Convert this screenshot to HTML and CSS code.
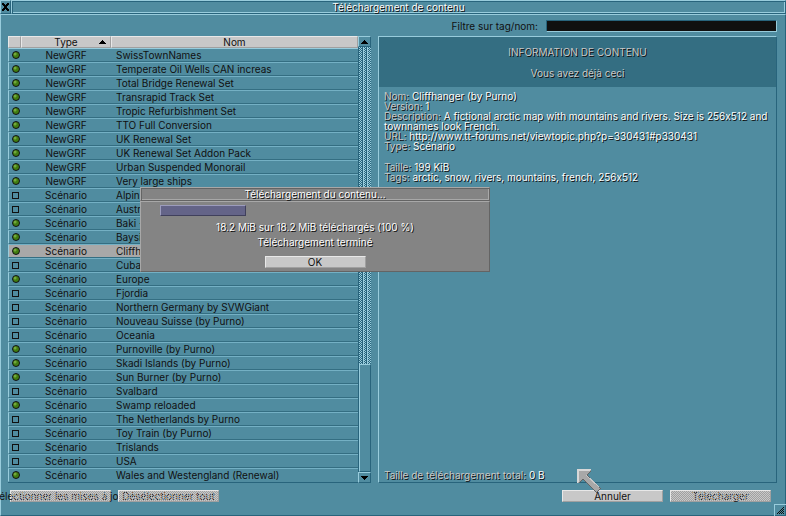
FILE: index.html
```
<!DOCTYPE html>
<html lang="fr">
<head>
<meta charset="utf-8">
<title>Téléchargement de contenu</title>
<link rel="stylesheet" href="styles.css">
</head>
<body>
<main class="window">
  <header class="titlebar">
    <button class="close" type="button" aria-label="Fermer">
      <svg width="7" height="8" viewBox="0 0 7 8" shape-rendering="crispEdges" aria-hidden="true"><path d="M0 0h2v1h1v1h1V1h1V0h2v2H6v1H5v2h1v1h1v2H5V7H4V6H3v1H2v1H0V6h1V5h1V3H1V2H0z"/></svg>
    </button>
    <h1 class="caption">Téléchargement de contenu</h1>
  </header>

  <div class="body">
    <div class="filter">
      <label for="filter">Filtre sur tag/nom:</label>
      <input id="filter" type="text">
    </div>

    <div class="columns">
      <section class="list">
        <table class="contents">
          <thead>
            <tr>
              <th class="col-state"><button class="head" type="button" aria-label="État"></button></th>
              <th class="col-type"><button class="head" type="button">Type<svg class="sort" width="7" height="4" viewBox="0 0 7 4" shape-rendering="crispEdges" aria-hidden="true"><path d="M3 0h1v1h1v1h1v1h1v1H0V3h1V2h1V1h1z"/></svg></button></th>
              <th><button class="head" type="button">Nom</button></th>
            </tr>
          </thead>
          <tbody id="rows"></tbody>
        </table>
        <div class="scrollbar">
          <button class="arrow" type="button" aria-label="Haut"><svg width="7" height="4" viewBox="0 0 7 4" shape-rendering="crispEdges" aria-hidden="true"><path d="M3 0h1v1h1v1h1v1h1v1H0V3h1V2h1V1h1z"/></svg></button>
          <div class="track"><div class="thumb"></div></div>
          <button class="arrow" type="button" aria-label="Bas"><svg width="7" height="4" viewBox="0 0 7 4" shape-rendering="crispEdges" aria-hidden="true"><path d="M0 0h7v1H6v1H5v1H4v1H3V3H2V2H1V1H0z"/></svg></button>
        </div>
      </section>

      <section class="details">
        <div class="banner">
          <h2>INFORMATION DE CONTENU</h2>
          <p>Vous avez déjà ceci</p>
        </div>
        <div class="facts">
          <p>Nom: <b>Cliffhanger (by Purno)</b></p>
          <p>Version: <b>1</b></p>
          <p>Description: <b>A fictional arctic map with mountains and rivers. Size is 256x512 and townnames look French.</b></p>
          <p>URL: <a href="http://www.tt-forums.net/viewtopic.php?p=330431#p330431">http://www.tt-forums.net/viewtopic.php?p=330431#p330431</a></p>
          <p>Type: <b>Scénario</b></p>
          <p class="spaced">Taille: <b>199 KiB</b></p>
          <p>Tags: <b>arctic, snow, rivers, mountains, french, 256x512</b></p>
        </div>
        <p class="total">Taille de téléchargement total: <b>0 B</b></p>
      </section>
    </div>

    <footer class="actions">
      <button class="btn" type="button" disabled><span>Sélectionner les mises à jour</span></button>
      <button class="btn" type="button" disabled><span>Désélectionner tout</span></button>
      <button class="btn push" type="button"><span>Annuler</span></button>
      <button class="btn" type="button" disabled><span>Télécharger</span></button>
    </footer>
  </div>

  <svg class="resize" width="12" height="12" viewBox="0 0 12 12" shape-rendering="crispEdges" aria-hidden="true">
    <path class="resize-edge" d="M0 0h12v1H1v11H0z"/>
    <path class="resize-grip" d="M3 9h1v1H3zM4 8h1v1H4zM5 7h1v1H5zM6 6h1v1H6zM7 5h1v1H7zM8 4h1v1H8zM9 3h1v1H9zM5 9h1v1H5zM6 8h1v1H6zM7 7h1v1H7zM8 6h1v1H8zM9 5h1v1H9zM7 9h1v1H7zM8 8h1v1H8zM9 7h1v1H9zM9 9h1v1H9z"/>
  </svg>

  <div class="dialog" role="dialog" aria-labelledby="dialog-title">
    <h2 class="caption" id="dialog-title">Téléchargement du contenu...</h2>
    <div class="dialog-body">
      <div class="progress"></div>
      <p>18.2 MiB sur 18.2 MiB téléchargés (100 %)</p>
      <p>Téléchargement terminé</p>
      <button class="btn" type="button"><span>OK</span></button>
    </div>
  </div>

  <svg class="pointer" width="24" height="24" viewBox="0 0 24 24" shape-rendering="crispEdges" aria-hidden="true">
    <path class="pointer-dark" d="M0 0h14v2l-4 4 14 13-5 5L6 11l-4 3H0z"/>
    <path class="pointer-fill" d="M0 0h14v1L9 6l14 13-4 4L6 10l-5 4H0z"/>
    <path class="pointer-light" d="M0 0h14l-2 2H2v10l-2 2z"/>
    <path class="pointer-shine" d="M9 6L22 18"/>
  </svg>
</main>
<script src="list.js"></script>
</body>
</html>
```
FILE: styles.css
```
:root {
  --face: #508ca0;
  --light: #98ccdc;
  --dark: #28647c;
  --deep: #346e82;
  --row-light: #74b0c4;
  --black: #101010;
  --silver: #c8c8c8;
}

* { box-sizing: border-box; }

body {
  margin: 0;
  background: var(--face);
  color: var(--black);
  font: 10px/12px Inter, "DejaVu Sans Condensed", Verdana, sans-serif;
  font-variant-ligatures: no-contextual;
}

h1, h2, p { margin: 0; font-size: 10px; font-weight: 400; }
b { font-weight: 400; color: #fcfcfc; }
button, input { font: inherit; color: inherit; padding: 0; margin: 0; border-radius: 0; }
svg { display: block; flex: none; }

.window {
  position: relative;
  display: flex;
  flex-direction: column;
  min-height: 100vh;
  background: var(--face);
}

.titlebar { display: flex; height: 14px; }

.close {
  display: grid;
  place-items: center;
  width: 11px;
  background: var(--face);
  border: 1px solid;
  border-color: var(--light) var(--dark) var(--dark) var(--light);
}

.caption {
  flex: 1;
  height: 14px;
  border: 1px solid;
  border-color: var(--light) var(--dark) var(--dark) var(--light);
  box-shadow: inset 1px 1px var(--dark), inset -1px -1px var(--light);
  color: #fcfcfc;
  text-align: center;
  text-shadow: 1px 1px var(--black);
}

.body {
  flex: 1;
  display: flex;
  flex-direction: column;
  padding: 5px 8px 13px 7px;
  border: 1px solid;
  border-color: var(--light) var(--dark) var(--dark) var(--light);
}

.filter {
  display: flex;
  justify-content: flex-end;
  gap: 8px;
  margin-bottom: 4px;
}

.filter input {
  width: 231px;
  height: 12px;
  background: var(--black);
  color: #fcfcfc;
  border: 1px solid;
  border-color: var(--dark) var(--light) var(--light) var(--dark);
}

.columns {
  flex: 1;
  display: grid;
  grid-template-columns: 363fr 399fr;
  gap: 7px;
}

.list { display: flex; align-items: stretch; }

.contents {
  flex: 1;
  table-layout: fixed;
  border-collapse: separate;
  border-spacing: 0;
  border-bottom: 1px solid var(--dark);
}

.contents th, .contents td { padding: 0; font-weight: 400; white-space: nowrap; }
.contents th { height: 12px; }
.col-state { width: 13px; }
.col-type { width: 90px; }

.head {
  position: relative;
  display: block;
  width: 100%;
  height: 12px;
  line-height: 10px;
  background: var(--silver);
  border: 1px solid;
  border-color: #e8e8e8 #a0a0a0 #a0a0a0 #e8e8e8;
}

.sort { position: absolute; right: 4px; top: 3px; }

.contents td {
  height: 14px;
  border-top: 1px solid var(--row-light);
  border-bottom: 1px solid var(--deep);
}

.contents tr:last-child td { border-bottom-color: var(--face); }
.contents tbody tr:first-child td { border-top-color: var(--light); }
.contents td:first-child { border-left: 1px solid var(--light); padding-left: 3px; }
.contents td:nth-child(2) { text-align: center; }
.contents td:nth-child(3) { padding-left: 5px; }
.contents .selected td { background: #a8a8a8; }

.contents input {
  appearance: none;
  display: block;
  width: 7px;
  height: 7px;
  border: 1px solid var(--black);
}

.contents input.owned {
  width: 8px;
  height: 8px;
  border-radius: 4px;
  background: radial-gradient(circle at 2px 2px, #74a83c 0 1px, #407c10 2px 4px, #305c08 5px);
}

.scrollbar { display: flex; flex-direction: column; width: 13px; }

.arrow {
  display: grid;
  place-items: center;
  height: 11px;
  background: var(--face);
  border: 1px solid;
  border-color: var(--light) var(--dark) var(--dark) var(--light);
}

.track {
  flex: 1;
  display: flex;
  flex-direction: column;
  justify-content: flex-end;
  border-left: 1px solid var(--dark);
  background:
    linear-gradient(90deg, transparent 3px, var(--dark) 3px 4px, var(--light) 4px 5px, transparent 5px 7px, var(--dark) 7px 8px, var(--light) 8px 9px, transparent 9px),
    repeating-conic-gradient(var(--dark) 0 25%, var(--light) 0 50%) 0 0 / 2px 2px;
}

.thumb {
  height: 25.4%;
  background: var(--face);
  border: 1px solid;
  border-color: var(--light) var(--dark) var(--dark) var(--light);
}

.details {
  display: flex;
  flex-direction: column;
  border: 1px solid;
  border-color: var(--light) var(--dark) var(--dark) var(--light);
  color: var(--silver);
  text-shadow: 1px 1px var(--black);
}

.banner {
  display: grid;
  gap: 9px;
  padding: 9px 0 8px;
  background: var(--deep);
  text-align: center;
}

.facts { padding: 4px 5px; line-height: 10px; }
.facts a { color: #fcfcfc; text-decoration: none; }
.facts .spaced { margin-top: 11px; }
.total { margin-top: auto; padding: 0 5px 1px; }

.actions {
  display: flex;
  gap: 7px;
  margin-top: 7px;
  padding: 0 6px 0 2px;
}

.btn {
  position: relative;
  display: flex;
  justify-content: center;
  width: 101px;
  height: 12px;
  line-height: 10px;
  background: var(--silver);
  border: 1px solid;
  border-color: #e8e8e8 #a0a0a0 #a0a0a0 #e8e8e8;
  white-space: nowrap;
}

.btn:disabled { color: var(--black); }

.btn:disabled::after {
  content: "";
  position: absolute;
  inset: 0;
  background: repeating-conic-gradient(#a0a0a0 0 25%, transparent 0 50%) 0 0 / 2px 2px;
}

.push { margin-left: auto; }

.resize { position: absolute; right: 0; bottom: 0; }
.resize-edge { fill: var(--light); }
.resize-grip { fill: var(--black); }

.dialog {
  --light: #a8a8a8;
  --dark: #646464;
  position: absolute;
  left: 140px;
  top: 187px;
  width: 350px;
  background: #848484;
}

.dialog-body {
  display: flex;
  flex-direction: column;
  align-items: center;
  padding: 3px 19px;
  border: 1px solid;
  border-color: var(--light) var(--dark) var(--dark) var(--light);
  color: #fcfcfc;
}

.dialog p { margin-bottom: 3px; text-shadow: 1px 1px var(--black); }

.progress {
  align-self: flex-start;
  width: 86px;
  height: 11px;
  margin-bottom: 5px;
  background: #646488;
  border: 1px solid;
  border-color: #9c9cbc #40405c #40405c #9c9cbc;
}

.dialog .btn { margin-top: 5px; color: var(--black); }

.pointer { position: absolute; left: 577px; top: 469px; }
.pointer-dark { fill: #646464; }
.pointer-fill { fill: #a8a8a8; }
.pointer-light { fill: #d8d8d8; }
.pointer-shine { fill: none; stroke: #c8c8c8; }
```
FILE: list.js
```
const items = [
  ["NewGRF", "SwissTownNames", 1],
  ["NewGRF", "Temperate Oil Wells CAN increas", 1],
  ["NewGRF", "Total Bridge Renewal Set", 1],
  ["NewGRF", "Transrapid Track Set", 1],
  ["NewGRF", "Tropic Refurbishment Set", 1],
  ["NewGRF", "TTO Full Conversion", 1],
  ["NewGRF", "UK Renewal Set", 1],
  ["NewGRF", "UK Renewal Set Addon Pack", 1],
  ["NewGRF", "Urban Suspended Monorail", 1],
  ["NewGRF", "Very large ships", 1],
  ["Scénario", "Alpin", 0],
  ["Scénario", "Austr", 0],
  ["Scénario", "Baki -", 1],
  ["Scénario", "Baysi", 1],
  ["Scénario", "Cliffhanger (by Purno)", 1],
  ["Scénario", "Cuba", 0],
  ["Scénario", "Europe", 1],
  ["Scénario", "Fjordia", 0],
  ["Scénario", "Northern Germany by SVWGiant", 0],
  ["Scénario", "Nouveau Suisse (by Purno)", 0],
  ["Scénario", "Oceania", 0],
  ["Scénario", "Purnoville (by Purno)", 1],
  ["Scénario", "Skadi Islands (by Purno)", 1],
  ["Scénario", "Sun Burner (by Purno)", 1],
  ["Scénario", "Svalbard", 0],
  ["Scénario", "Swamp reloaded", 1],
  ["Scénario", "The Netherlands by Purno", 0],
  ["Scénario", "Toy Train (by Purno)", 0],
  ["Scénario", "Trislands", 0],
  ["Scénario", "USA", 0],
  ["Scénario", "Wales and Westengland (Renewal)", 1],
];

const body = document.getElementById("rows");
for (const [type, name, owned] of items) {
  const row = body.insertRow();
  if (name.startsWith("Cliffhanger")) row.className = "selected";
  const box = document.createElement("input");
  box.type = "checkbox";
  box.setAttribute("aria-label", name);
  if (owned) {
    box.className = "owned";
    box.checked = true;
    box.disabled = true;
  }
  row.insertCell().append(box);
  row.insertCell().textContent = type;
  row.insertCell().textContent = name;
}
```
